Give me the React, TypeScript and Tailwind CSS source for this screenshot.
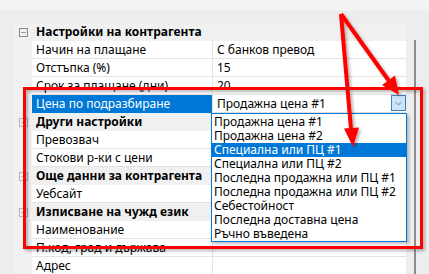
import { Minus, Plus, ChevronDown } from 'lucide-react'

type Row = { label: string; value?: string; cat?: boolean; open?: boolean; selected?: boolean }

const rows: Row[] = [
  { label: 'Настройки на контрагента', cat: true, open: true },
  { label: 'Начин на плащане', value: 'С банков превод' },
  { label: 'Отстъпка (%)', value: '15' },
  { label: 'Срок за плащане (дни)', value: '20' },
  { label: 'Цена по подразбиране', value: 'Продажна цена #1', selected: true },
  { label: 'Други настройки', cat: true },
  { label: 'Превозвач' },
  { label: 'Стокови р-ки с цени' },
  { label: 'Още данни за контрагента', cat: true },
  { label: 'Уебсайт' },
  { label: 'Изписване на чужд език', cat: true },
  { label: 'Наименование' },
  { label: 'П.код, град и държава' },
  { label: 'Адрес' },
]

const options = [
  'Продажна цена #1',
  'Продажна цена #2',
  'Специална или ПЦ #1',
  'Специална или ПЦ #2',
  'Последна продажна или ПЦ #1',
  'Последна продажна или ПЦ #2',
  'Себестойност',
  'Последна доставна цена',
  'Ръчно въведена',
]

function GridRow({ row }: { row: Row }) {
  if (row.cat) {
    return (
      <div className="flex h-[18px] bg-[#f0f0f0]">
        <div className="w-[18px] flex items-center justify-center">
          <div className={`w-[9px] h-[9px] border flex items-center justify-center ${row.open ? 'border-[#8a8a8a] text-[#555]' : 'border-[#b4b4b4] text-[#999]'}`}>
            {row.open ? <Minus size={7} strokeWidth={2} /> : <Plus size={7} strokeWidth={2} />}
          </div>
        </div>
        <div className="w-[180px] flex items-center pl-[4px] font-bold leading-[16px] whitespace-nowrap">{row.label}</div>
        <div className="flex-1" />
      </div>
    )
  }
  return (
    <div className="flex h-[18px] bg-[#f0f0f0]">
      <div className="w-[18px]" />
      <div
        className={`w-[180px] flex items-center pl-[4px] border-b leading-[16px] ${
          row.selected ? 'bg-[#0078d7] text-white border-[#0078d7]' : 'bg-white border-[#e3e3e3]'
        }`}
      >
        {row.label}
      </div>
      <div className="w-px bg-[#e3e3e3]" />
      <div className="flex-1 flex items-center pl-[4px] bg-white border-b border-[#e3e3e3] relative leading-[16px]">
        {row.value}
        {row.selected && (
          <div className="absolute right-0 top-0 w-[15px] h-[16px] bg-[#cce4f7] border border-[#3d7fb8] flex items-center justify-center text-[#444]">
            <ChevronDown size={11} strokeWidth={1.3} />
          </div>
        )}
      </div>
    </div>
  )
}

export default function App() {
  return (
    <div className="relative w-[429px] h-[274px] overflow-hidden bg-[#ededed] text-[12px] leading-none text-black font-['Noto_Sans',sans-serif]">
      <div className="h-[10px] bg-[#f3f3f3]" />
      <div className="flex pt-[13px]">
        <div className="w-[14px]" />
        <div className="w-[392px] flex flex-col">
          {rows.map((r) => (
            <GridRow key={r.label} row={r} />
          ))}
        </div>
        <div className="w-[8px]" />
        <div className="w-[2px] mt-[17px] h-[240px] bg-[#8c8c8c]" />
      </div>

      {/* dropdown list */}
      <div className="absolute left-[211px] top-[113px] w-[196px] h-[129px] bg-white border border-[#0078d7] shadow-[2px_2px_3px_rgba(0,0,0,0.25)] py-[1px]">
        {options.map((o, i) => (
          <div
            key={o}
            className={`h-[14px] flex items-center pl-[2px] leading-[14px] ${i === 2 ? 'bg-[#0078d7] text-white' : ''}`}
          >
            {o}
          </div>
        ))}
      </div>

      {/* annotation */}
      <svg className="absolute inset-0 pointer-events-none" width="429" height="274">
        <defs>
          <filter id="sh" x="-10%" y="-10%" width="130%" height="130%">
            <feDropShadow dx="2" dy="2" stdDeviation="1.5" floodColor="#000" floodOpacity="0.3" />
          </filter>
        </defs>
        <g filter="url(#sh)" fill="#ff0000" stroke="#ff0000">
          <rect x="24.5" y="88.5" width="397" height="159" fill="none" strokeWidth="3" />
          <line x1="341" y1="14" x2="389" y2="81" strokeWidth="4" />
          <polygon points="399,95 382,85 395,75.5" stroke="none" />
          <line x1="341" y1="14" x2="351" y2="129" strokeWidth="4" />
          <polygon points="353,147 344,128.5 359,127.5" stroke="none" />
        </g>
      </svg>
    </div>
  )
}
